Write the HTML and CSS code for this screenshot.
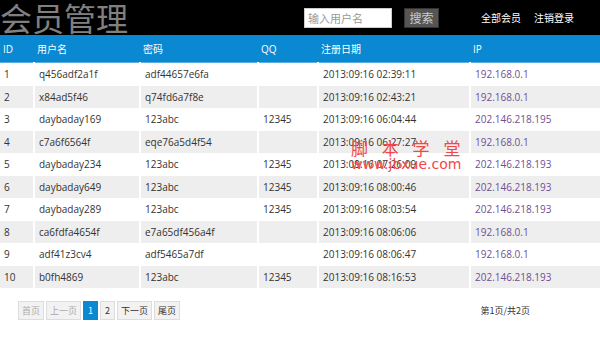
FILE: index.html
```html
<!DOCTYPE html>
<html lang="zh-CN">
<head>
  <meta charset="UTF-8" />
  <meta name="viewport" content="width=device-width, initial-scale=1.0" />
  <title>会员管理</title>
  <link rel="stylesheet" href="styles.css">
</head>
<body>
  <div class="topbar">
    <h1 class="logo">会员管理</h1>
    <form class="search">
      <input type="text" placeholder="输入用户名" />
      <button type="button">搜索</button>
    </form>
    <nav class="links">
      <a href="#">全部会员</a>
      <a href="#">注销登录</a>
    </nav>
  </div>

  <table class="users">
    <thead>
      <tr>
        <th class="c-id">ID</th>
        <th class="c-name">用户名</th>
        <th class="c-pwd">密码</th>
        <th class="c-qq">QQ</th>
        <th class="c-date">注册日期</th>
        <th>IP</th>
      </tr>
    </thead>
    <tbody>
      <tr><td>1</td><td>q456adf2a1f</td><td>adf44657e6fa</td><td></td><td>2013:09:16 02:39:11</td><td class="ip">192.168.0.1</td></tr>
      <tr><td>2</td><td>x84ad5f46</td><td>q74fd6a7f8e</td><td></td><td>2013:09:16 02:43:21</td><td class="ip">192.168.0.1</td></tr>
      <tr><td>3</td><td>daybaday169</td><td>123abc</td><td>12345</td><td>2013:09:16 06:04:44</td><td class="ip">202.146.218.195</td></tr>
      <tr><td>4</td><td>c7a6f6564f</td><td>eqe76a5d4f54</td><td></td><td>2013:09:16 06:27:27</td><td class="ip">192.168.0.1</td></tr>
      <tr><td>5</td><td>daybaday234</td><td>123abc</td><td>12345</td><td>2013:09:16 07:26:09</td><td class="ip">202.146.218.193</td></tr>
      <tr><td>6</td><td>daybaday649</td><td>123abc</td><td>12345</td><td>2013:09:16 08:00:46</td><td class="ip">202.146.218.193</td></tr>
      <tr><td>7</td><td>daybaday289</td><td>123abc</td><td>12345</td><td>2013:09:16 08:03:54</td><td class="ip">202.146.218.193</td></tr>
      <tr><td>8</td><td>ca6fdfa4654f</td><td>e7a65df456a4f</td><td></td><td>2013:09:16 08:06:06</td><td class="ip">192.168.0.1</td></tr>
      <tr><td>9</td><td>adf41z3cv4</td><td>adf5465a7df</td><td></td><td>2013:09:16 08:06:47</td><td class="ip">192.168.0.1</td></tr>
      <tr><td>10</td><td>b0fh4869</td><td>123abc</td><td>12345</td><td>2013:09:16 08:16:53</td><td class="ip">202.146.218.193</td></tr>
    </tbody>
  </table>

  <div class="pager">
    <div class="pages">
      <span class="btn off">首页</span>
      <span class="btn off">上一页</span>
      <span class="btn num cur">1</span>
      <a class="btn num" href="#">2</a>
      <a class="btn" href="#">下一页</a>
      <a class="btn" href="#">尾页</a>
    </div>
    <span class="info">第1页/共2页</span>
  </div>

  <!-- 水印 -->
  <div class="mark">
    <span class="mark-cn">脚 本 学 堂</span>
    <span class="mark-en">www.jbxue.com</span>
  </div>
</body>
</html>
```

FILE: styles.css
```css
body {
  margin: 0;
  font-family: "Open Sans", "Noto Sans CJK SC", sans-serif;
  font-size: 10px;
  color: #333;
  background: #fff;
  position: relative;
}
a {
  text-decoration: none;
}
.topbar {
  height: 35px;
  background: #000;
  display: flex;
  align-items: center;
}
.logo {
  margin: 0;
  font-family: "Noto Sans CJK SC", sans-serif;
  font-size: 32px;
  font-weight: normal;
  line-height: 35px;
  color: #808080;
  width: 304px;
  white-space: nowrap;
}
.search {
  display: flex;
  align-items: center;
}
.search input {
  box-sizing: border-box;
  width: 88px;
  height: 20px;
  margin: 0;
  padding: 0 3px;
  border: 1px solid #ccc;
  font-family: "Noto Sans CJK SC", sans-serif;
  font-size: 11px;
  outline: none;
}
.search input::placeholder {
  color: #999;
}
.search button {
  box-sizing: border-box;
  width: 35px;
  height: 20px;
  margin-left: 12px;
  padding: 0;
  border: 1px solid #333;
  background: #555;
  color: #ccc;
  font-family: "Noto Sans CJK SC", sans-serif;
  font-size: 12px;
}
.links {
  margin-left: 42px;
  display: flex;
  gap: 13px;
}
.links a {
  color: #fff;
  font-family: "Noto Sans CJK SC", sans-serif;
  font-size: 10px;
}
.users {
  width: 100%;
  border-collapse: collapse;
}
.users th {
  background: #0a88d1;
  color: #fff;
  font-weight: normal;
  text-align: left;
  height: 27px;
  padding: 0 0 0 3px;
  border-bottom: 1px solid #5aaee0;
}
.users td {
  height: 22.5px;
  padding: 0 0 0 4px;
  white-space: nowrap;
}
.users td + td {
  border-left: 2px solid #fff;
}
.users tbody tr:nth-child(even) td {
  background: #eee;
}
.c-id { width: 31px; }
.c-name { width: 103px; }
.c-pwd { width: 115px; }
.c-qq { width: 57px; }
.c-date { width: 149px; }
.users .ip {
  color: #6f4f96;
}
.pager {
  display: flex;
  justify-content: space-between;
  align-items: center;
  margin-top: 13px;
  padding: 0 70px 0 18px;
}
.pages {
  display: flex;
  gap: 2px;
}
.btn {
  box-sizing: border-box;
  height: 19px;
  line-height: 17px;
  padding: 0 3px;
  border: 1px solid #ddd;
  background: #f2f2f2;
  color: #333;
  font-family: "Noto Sans CJK SC", sans-serif;
  font-size: 9px;
}
.btn.num {
  padding: 0 4px;
  min-width: 15px;
  text-align: center;
}
.btn.off {
  color: #aaa;
}
.btn.cur {
  background: #0a88d1;
  border-color: #0a88d1;
  color: #fff;
}
.info {
  font-family: "Noto Sans CJK SC", sans-serif;
  font-size: 9px;
}
.mark {
  position: absolute;
  left: 351px;
  top: 139px;
  display: flex;
  flex-direction: column;
  color: #f04848;
  line-height: 1;
}
.mark-cn {
  font-family: "Noto Sans CJK SC", sans-serif;
  font-size: 17px;
  letter-spacing: 5px;
}
.mark-en {
  font-family: "DejaVu Sans", sans-serif;
  font-size: 14px;
  margin-top: 1px;
}
```
